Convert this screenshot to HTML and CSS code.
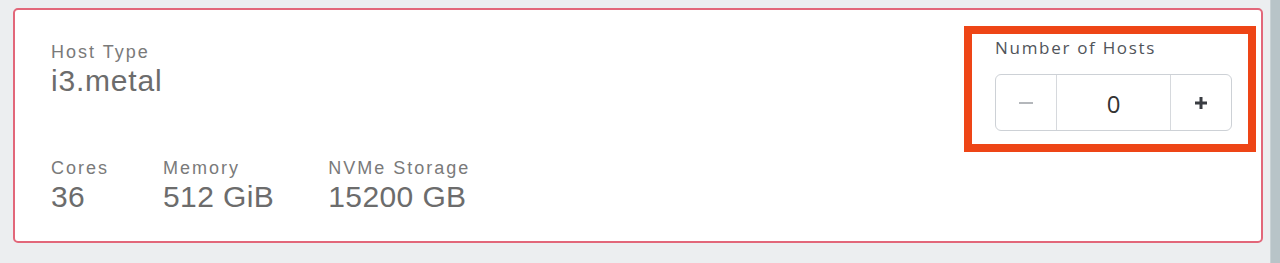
FILE: index.html
```html
<!DOCTYPE html>
<html lang="en">
<head>
<meta charset="utf-8">
<title>Host configuration</title>
<link rel="stylesheet" href="styles.css">
</head>
<body>
<div class="page">
  <main class="main">
    <section class="card">
      <div class="info">
        <div class="field">
          <div class="label">Host Type</div>
          <div class="value host">i3.metal</div>
        </div>
        <div class="specs">
          <div class="field">
            <div class="label">Cores</div>
            <div class="value">36</div>
          </div>
          <div class="field">
            <div class="label">Memory</div>
            <div class="value">512 GiB</div>
          </div>
          <div class="field">
            <div class="label">NVMe Storage</div>
            <div class="value">15200 GB</div>
          </div>
        </div>
      </div>
      <div class="highlight">
        <div class="hosts-label">Number of Hosts</div>
        <div class="stepper">
          <button class="step minus" type="button" aria-label="Decrease">
            <svg width="14" height="4" viewBox="0 0 14 4"><rect x="0" y="1" width="14" height="2" fill="#b4b7bb"/></svg>
          </button>
          <div class="count">0</div>
          <button class="step plus" type="button" aria-label="Increase">
            <svg width="12" height="12" viewBox="0 0 12 12"><rect x="0" y="4.5" width="12" height="3" fill="#3a3d42"/><rect x="4.5" y="0" width="3" height="12" fill="#3a3d42"/></svg>
          </button>
        </div>
      </div>
    </section>
  </main>
  <div class="scrollbar"></div>
</div>
</body>
</html>
```

FILE: styles.css
```css
html, body {
  margin: 0;
  padding: 0;
  height: 100%;
}
body {
  background: #eceef0;
  font-family: "Liberation Sans", Arial, sans-serif;
}
.page {
  display: flex;
  height: 263px;
}
.main {
  flex: 1;
  padding: 8px 7px 0 13px;
}
.scrollbar {
  width: 9px;
  background: #b8c4c8;
  border-left: 1px solid #c9d2d5;
}
.card {
  display: flex;
  justify-content: space-between;
  align-items: flex-start;
  background: #fff;
  border: 2px solid #e2677a;
  border-radius: 5px;
  padding: 16px 5px 27px 36px;
}
.info {
  padding-top: 15px;
}
.label {
  font-size: 18px;
  line-height: 22px;
  letter-spacing: 2px;
  color: #7a7a7a;
}
.value {
  font-size: 30px;
  line-height: 35px;
  letter-spacing: 0.4px;
  color: #6c6c6c;
}
.value.host {
  letter-spacing: 0.8px;
}
.specs {
  display: flex;
  gap: 54px;
  margin-top: 59px;
}
.highlight {
  border: 8px solid #ee4516;
  padding: 4px 16px 13px 23px;
  box-sizing: border-box;
  width: 292px;
}
.hosts-label {
  font-family: "Open Sans", "Liberation Sans", sans-serif;
  font-size: 17px;
  line-height: 20px;
  letter-spacing: 1.7px;
  font-weight: 500;
  color: #50545a;
}
.stepper {
  margin-top: 16px;
  display: grid;
  grid-template-columns: 60px 1fr 61px;
  height: 57px;
  box-sizing: border-box;
  border: 1px solid #cdd1d6;
  border-radius: 6px;
}
.step {
  display: flex;
  align-items: center;
  justify-content: center;
  background: transparent;
  border: 0;
  padding: 0;
  margin: 0;
}
.plus {
  border-left: 1px solid #d6d9dd;
}
.count {
  display: flex;
  align-items: center;
  justify-content: center;
  border-left: 1px solid #d6d9dd;
  font-family: "Open Sans", "Liberation Sans", sans-serif;
  font-size: 24px;
  color: #333;
  padding-top: 2px;
}
```
